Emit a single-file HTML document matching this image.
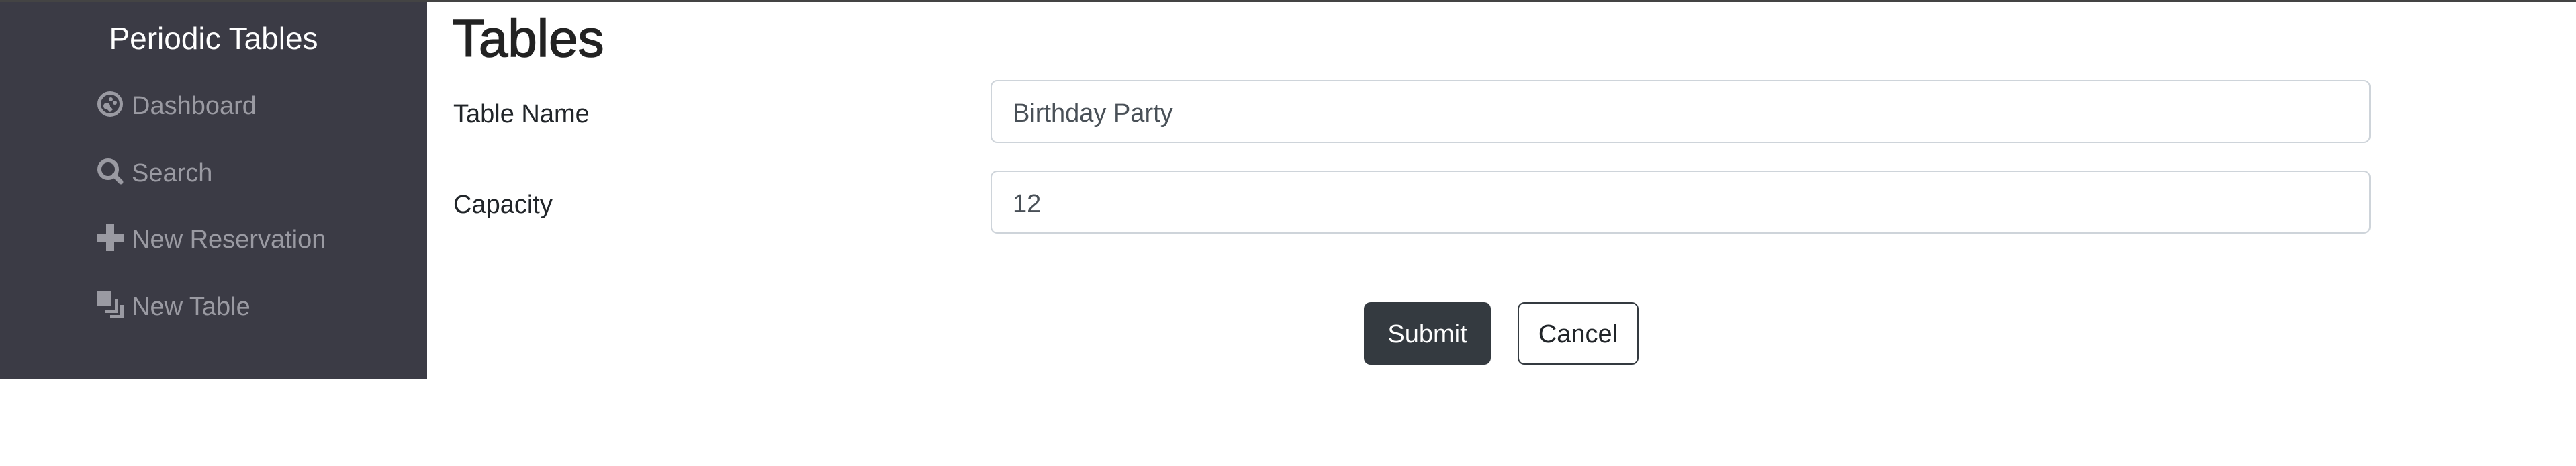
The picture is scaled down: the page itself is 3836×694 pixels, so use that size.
<!DOCTYPE html>
<html><head><style>
body{margin:0;width:3836px;height:694px;background:#fff;font-family:"Liberation Sans",sans-serif;position:relative;overflow:hidden}
.top{position:absolute;left:0;top:0;width:3836px;height:3px;background:#444}
.side{position:absolute;left:0;top:3px;width:636px;height:562px;background:#3b3b45}
.brand{position:absolute;left:0;width:636px;top:27px;text-align:center;color:#fff;font-size:46px}
.nav{position:absolute;left:144px;color:#9a9aa2;font-size:38px;height:40px;line-height:40px}
.nav svg{position:absolute;left:0;top:0}
.nav span{position:absolute;left:52px;top:3px;white-space:nowrap}
.h{position:absolute;left:674px;top:12px;font-size:78px;color:#222;font-weight:normal;-webkit-text-stroke:1.5px #222}
.lab{position:absolute;left:675px;font-size:38px;color:#212529}
.inp{position:absolute;left:1475px;width:2055px;height:94px;border:2px solid #ced4da;border-radius:10px;box-sizing:border-box;font-size:38px;color:#495057;line-height:96px;padding-left:31px}
.btn{position:absolute;top:450px;height:93px;border-radius:10px;box-sizing:border-box;font-size:38px;line-height:96px;text-align:center}
</style></head><body>
<div class="top"></div>
<div class="side">
<div class="brand">Periodic Tables</div>
<div class="nav" style="top:132px"><svg width="40" height="40" viewBox="0 0 40 40"><circle cx="20" cy="20" r="16.5" fill="none" stroke="#9a9aa2" stroke-width="5"/><circle cx="15" cy="23" r="5" fill="#9a9aa2"/><path d="M15 23 L22 30" stroke="#9a9aa2" stroke-width="6"/><circle cx="21" cy="13" r="3" fill="#9a9aa2"/><circle cx="27" cy="18" r="3" fill="#9a9aa2"/></svg><span>Dashboard</span></div>
<div class="nav" style="top:232px"><svg width="40" height="40" viewBox="0 0 40 40"><circle cx="17" cy="17" r="13" fill="none" stroke="#9a9aa2" stroke-width="6"/><path d="M26 26 L36 36" stroke="#9a9aa2" stroke-width="7" stroke-linecap="round"/></svg><span>Search</span></div>
<div class="nav" style="top:331px"><svg width="40" height="40" viewBox="0 0 40 40"><path d="M14 0h12v14h14v12H26v14H14V26H0V14h14z" fill="#9a9aa2"/></svg><span>New Reservation</span></div>
<div class="nav" style="top:431px"><svg width="40" height="40" viewBox="0 0 40 40"><rect x="0" y="0" width="22" height="22" fill="#9a9aa2"/><path d="M27 12v15H12v5h20V12z M35 20v15H20v5h20V20z" fill="#9a9aa2"/></svg><span>New Table</span></div>
</div>
<div class="h">Tables</div>
<div class="lab" style="top:149px">Table Name</div>
<div class="lab" style="top:284px">Capacity</div>
<div class="inp" style="top:119px">Birthday Party</div>
<div class="inp" style="top:254px">12</div>
<div class="btn" style="left:2031px;width:189px;background:#343a40;color:#fff">Submit</div>
<div class="btn" style="left:2260px;width:180px;border:2px solid #343a40;color:#212529;line-height:92px">Cancel</div>
</body></html>
